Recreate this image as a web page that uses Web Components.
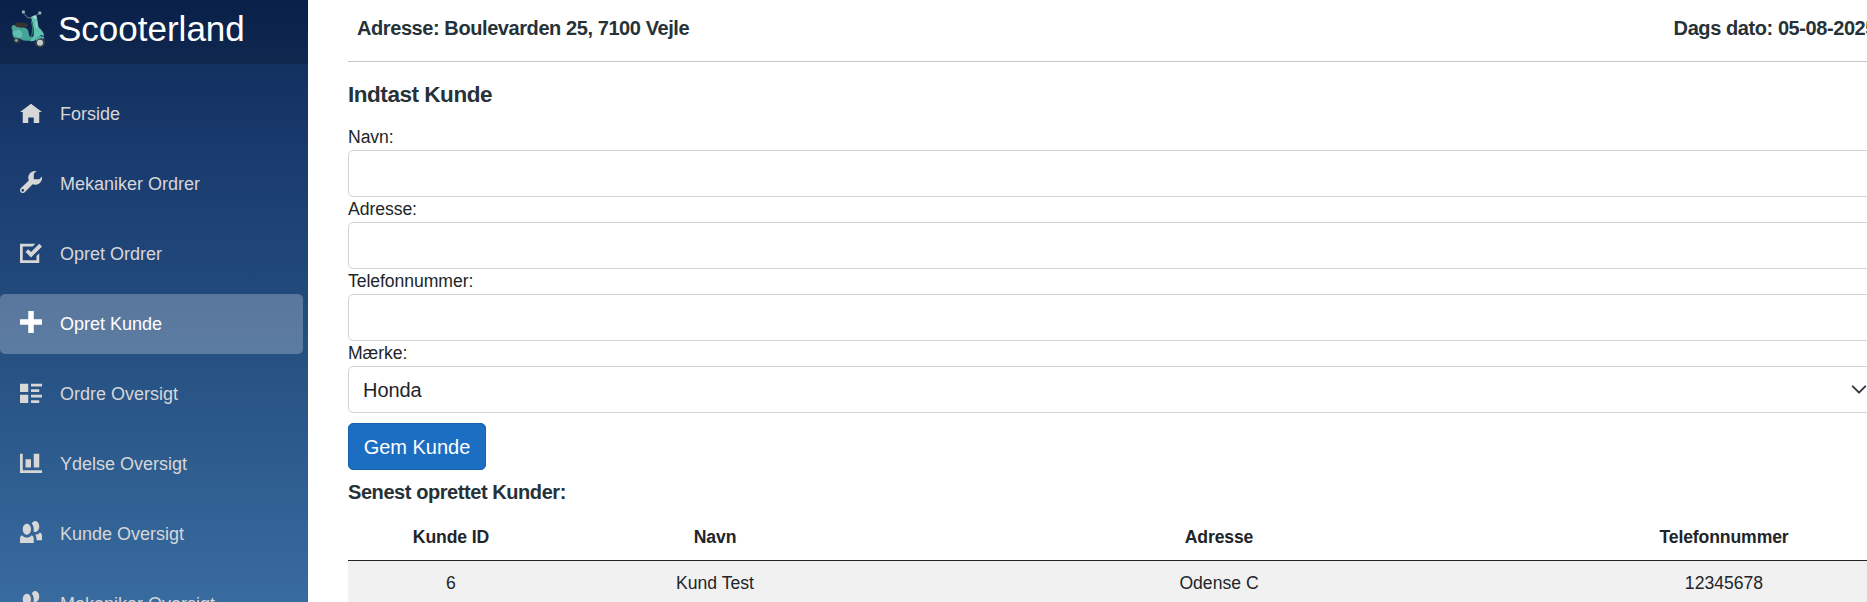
<!DOCTYPE html>
<html lang="da">
<head>
<meta charset="utf-8">
<title>Scooterland</title>
<style>
html,body{margin:0;height:100%;overflow:hidden;background:#fff}
body{font-family:"Liberation Sans",Arial,sans-serif;color:#212529}
</style>
</head>
<body>
<scooter-app></scooter-app>
<script>
const define=(name,html)=>{
  const t=document.createElement('template');t.innerHTML=html;
  customElements.define(name,class extends HTMLElement{
    constructor(){super();this.attachShadow({mode:'open'}).appendChild(t.content.cloneNode(true));}
  });
};
const ICONS={
home:[1,'M4 0l-4 3h1v4h2v-2h2v2h2v-4.03l1 .03-4-3z'],
wrench:[0,'M5.5 0c-1.38 0-2.5 1.12-2.5 2.5 0 .32.08.62.19.91l-2.91 2.88c-.39.39-.39 1.05 0 1.44.2.2.46.28.72.28.26 0 .52-.09.72-.28l2.88-2.91c.28.11.58.19.91.19 1.38 0 2.5-1.12 2.5-2.5 0-.16 0-.32-.03-.47l-.97.97h-2v-2l.97-.97c-.15-.03-.31-.03-.47-.03zm-4.5 6.5c.28 0 .5.22.5.5s-.22.5-.5.5-.5-.22-.5-.5.22-.5.5-.5z'],
task:[1,'M0 0v7h7v-3.59l-1 1v1.59h-5v-5h3.59l1-1h-5.59zm7 0l-3 3-1-1-1 1 2 2 4-4-1-1z'],
plus:[0,'M3 0v3h-3v2h3v3h2v-3h3v-2h-3v-3h-2z'],
list:[1,'M0 0v3h3v-3h-3zm4 0v1h4v-1h-4zm0 2v1h3v-1h-3zm-4 2v3h3v-3h-3zm4 0v1h4v-1h-4zm0 2v1h3v-1h-3z'],
chart:[1,'M0 0v7h8v-1h-7v-6h-1zm5 0v5h2v-5h-2zm-3 2v3h2v-3h-2z'],
people:[0,'M5.5 0c-.51 0-.95.35-1.22.88.45.54.72 1.28.72 2.13 0 .29-.03.55-.09.81.19.11.38.19.59.19.83 0 1.5-.9 1.5-2s-.67-2-1.5-2zm-3 1c-.83 0-1.5.9-1.5 2s.67 2 1.5 2 1.5-.9 1.5-2-.67-2-1.5-2zm4.75 3.16c-.43.51-1.02.82-1.69.84.27.38.44.84.44 1.34v.66h2v-1.66c0-.52-.31-.97-.75-1.19zm-6.5 1c-.44.22-.75.67-.75 1.19v1.66h5v-1.66c0-.52-.31-.97-.75-1.19-.45.53-1.06.84-1.75.84s-1.3-.32-1.75-.84z']
};
customElements.define('nav-item',class extends HTMLElement{
  connectedCallback(){
    const [dy,d]=ICONS[this.getAttribute('icon')];
    this.attachShadow({mode:'open'}).innerHTML=`<style>
:host{display:flex;align-items:center;box-sizing:border-box;height:60px;width:303px;padding-left:20px;border-radius:5px;color:#d7d7d7;font-size:18px;white-space:nowrap}
:host([active]){background:rgba(255,255,255,.25);color:#fff}
svg{width:22px;height:22px;margin:-4px 18px 0 0;fill:currentColor;flex:none}
</style><svg viewBox="0 0 8 8"><path transform="translate(0 ${dy})" d="${d}"/></svg><slot></slot>`;
  }
});
define('scooter-logo',`<style>:host{display:block;width:38px;height:42px}svg{display:block}</style>
<svg width="38" height="42" viewBox="9 10 38 42">
<path d="M24 13.5l3.5 4 6 .8M35 16l4-2.5" fill="none" stroke="#7b8a92" stroke-width=".9"/>
<circle cx="23.4" cy="12" r="1.7" fill="#9aa9b1"/><circle cx="39.8" cy="13" r="1.7" fill="#9aa9b1"/>
<circle cx="17" cy="40" r="3.4" fill="#2f3538"/><circle cx="16.4" cy="40.3" r="1.6" fill="#8c9698"/>
<path d="M12 29c3-3 13-3 16 1l1.500 6.500 6 .5-2 4-10-.5-4-2-5-.5c-2-1.500-3-5-1-9z" fill="#43a496"/>
<path d="M13 30c4-2 8 0 9 3 .5 2 0 4-1.500 5l-5-1.500c-2-1-3.500-4-2.500-6.500z" fill="#62beae"/>
<path d="M12 26c1-1.500 3-1.500 4 0l3 4-5 1c-2 0-3-3-2-5z" fill="#4da294"/>
<path d="M15 23.500c3-1.500 9-1 12.500.3 1.500.7 1 2.200-.5 2.900l-5 1c-3 .2-6-1-7.300-2.200z" fill="#373233"/>
<path d="M31 17c2-2 5-1.500 6 .5l1.500 9.500c2.500 3 5.500 5 5.500 9l-3-1-4 3-3 3-4 .3 3-3.800c2-5 0-12-2-20.500z" fill="#62c2b2"/>
<path d="M31.300 21c1.700 5 2.300 10 0 15" fill="none" stroke="#2b756c" stroke-width="1.300"/>
<path d="M36 21l.6 7" stroke="#a5e0d5" stroke-width="1"/>
<circle cx="40" cy="42.500" r="4.900" fill="#3c4347"/><circle cx="40" cy="42.800" r="3" fill="#c9cccc"/>
<path d="M35.500 39.500c1-3 5-4.500 8.500-2.500l.3 2c-3-1.500-6-.5-7.500 2z" fill="#4fae9f"/>
<circle cx="35" cy="17" r="1.700" fill="#bcd3da"/>
</svg>`);
define('side-bar',`<style>
:host{display:block;width:308px;height:602px;flex:none;overflow:hidden;background:linear-gradient(180deg,#12305f 0,#12305f 60px,#193a6e 150px,#275284 370px,#386b9f 602px)}
header{display:flex;align-items:center;height:64px;box-sizing:border-box;background:linear-gradient(180deg,#092049,#10284e);padding-left:9px;color:#fff;font-size:35px}
scooter-logo{margin:0 11px 2px 0}
header span{margin-top:-6px}
nav{display:flex;flex-direction:column;gap:10px;padding-top:20px}
</style><header><scooter-logo></scooter-logo><span>Scooterland</span></header>
<nav><nav-item icon="home">Forside</nav-item><nav-item icon="wrench">Mekaniker Ordrer</nav-item><nav-item icon="task">Opret Ordrer</nav-item><nav-item icon="plus" active>Opret Kunde</nav-item><nav-item icon="list">Ordre Oversigt</nav-item><nav-item icon="chart">Ydelse Oversigt</nav-item><nav-item icon="people">Kunde Oversigt</nav-item><nav-item icon="people">Mekaniker Oversigt</nav-item></nav>`);
define('top-row',`<style>
:host{display:flex;justify-content:space-between;align-items:center;box-sizing:border-box;height:62px;padding:0 10px 4px 9px;border-bottom:1px solid #c4c5c8;color:#263238;font-size:20px;font-weight:700;letter-spacing:-.42px}
</style><slot></slot>`);
define('form-field',`<style>
:host{display:block;font-size:17.6px;line-height:25px;letter-spacing:-.06px}
div{box-sizing:border-box;height:47px;border:1px solid #ced4da;border-radius:5px;display:flex;align-items:center;justify-content:space-between;padding:2px 15px 0 14px;font-size:20px}
label{display:block;height:25px}
</style><label><slot name="label"></slot></label><div><slot></slot></div>`);
define('save-button',`<style>
:host{display:flex;align-items:center;justify-content:center;width:138px;height:47px;box-sizing:border-box;padding-top:2px;border:1px solid #1861ac;border-radius:5px;background:#1b6ec2;color:#fff;font-size:20px}
</style><slot></slot>`);
define('customer-table',`<style>
:host{display:block;font-size:17.6px}
.r{display:grid;grid-template-columns:206px 322px 686px 324px;text-align:center;align-items:center}
.h{height:48px;box-sizing:content-box;font-weight:700;letter-spacing:-.12px;border-bottom:1px solid #212529}
.h span{padding-top:2px}
.b{height:44px;padding-bottom:2px;background:#f1f1f1}
</style><div class="r h"><span>Kunde ID</span><span>Navn</span><span>Adresse</span><span>Telefonnummer</span></div>
<div class="r b"><span>6</span><span>Kund Test</span><span>Odense C</span><span>12345678</span></div>`);
define('main-panel',`<style>
:host{display:block;width:1538px;flex:none;margin-left:40px}
h1,h2{margin:0;color:#263238;font-weight:700}
h1{font-size:22.5px;line-height:28px;margin:19px 0 16px;letter-spacing:-.46px}
h2{font-size:20px;line-height:24px;margin:10px 0 8px;letter-spacing:-.43px}
save-button{margin-top:10px}
svg{margin:-2px 1px 0 0}
</style>
<top-row><span>Adresse: Boulevarden 25, 7100 Vejle</span><span>Dags dato: 05-08-2025</span></top-row>
<h1>Indtast Kunde</h1>
<form-field><span slot="label">Navn:</span></form-field>
<form-field><span slot="label">Adresse:</span></form-field>
<form-field><span slot="label">Telefonnummer:</span></form-field>
<form-field><span slot="label">Mærke:</span><span>Honda</span><svg width="20" height="15" viewBox="0 0 16 12"><path d="M3 3.5l5 5 5-5" fill="none" stroke="#343a40" stroke-width="1.6" stroke-linecap="round" stroke-linejoin="round"/></svg></form-field>
<save-button>Gem Kunde</save-button>
<h2>Senest oprettet Kunder:</h2>
<customer-table></customer-table>`);
define('scooter-app',`<style>:host{display:flex;width:100%;height:602px;overflow:hidden}</style><side-bar></side-bar><main-panel></main-panel>`);
</script>
</body>
</html>
